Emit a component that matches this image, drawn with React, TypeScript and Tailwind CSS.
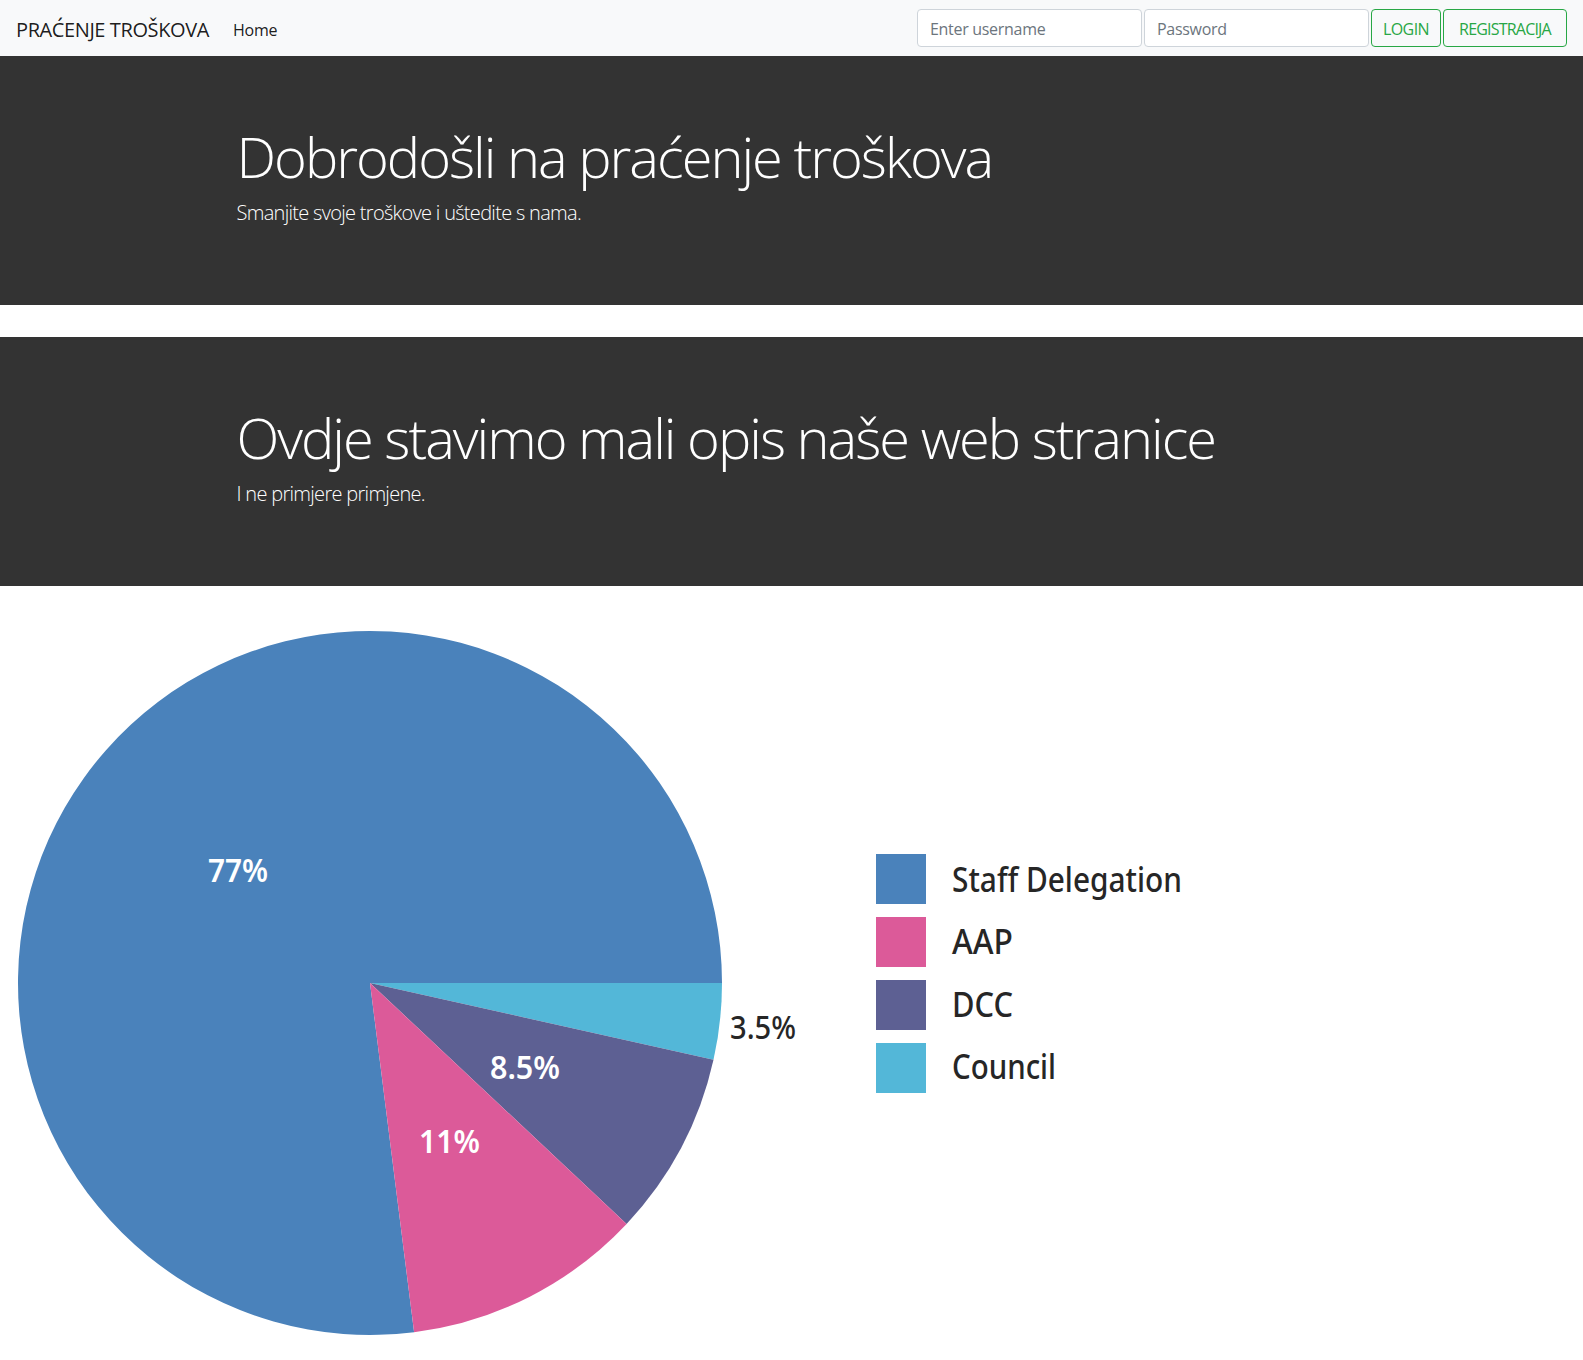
import React from "react";

const font = { fontFamily: '"Open Sans", "Noto Sans", sans-serif' };

function Chart() {
  const cx = 370;
  const cy = 397;
  const r = 352;
  const chartFont = '"Noto Sans", "Open Sans", sans-serif';
  const legend = [
    { label: "Staff Delegation", color: "#4a82bb", y: 268, base: 306, w: 230 },
    { label: "AAP", color: "#dc5a99", y: 331, base: 368, w: 61 },
    { label: "DCC", color: "#5d6093", y: 394, base: 431, w: 61 },
    { label: "Council", color: "#53b7d8", y: 457, base: 493, w: 104 },
  ];
  return (
    <svg width="1200" height="774" viewBox="0 0 1200 774" className="block">
      <path d={`M${cx} ${cy} L414.1 746.2 A${r} ${r} 0 1 1 722 397 Z`} fill="#4a82bb" />
      <path d={`M${cx} ${cy} L722 397 A${r} ${r} 0 0 1 713.5 473.8 Z`} fill="#53b7d8" />
      <path d={`M${cx} ${cy} L713.5 473.8 A${r} ${r} 0 0 1 626.6 638 Z`} fill="#5d6093" />
      <path d={`M${cx} ${cy} L626.6 638 A${r} ${r} 0 0 1 414.1 746.2 Z`} fill="#dc5a99" />
      <text x="208" y="296" fill="#fff" fontFamily={chartFont} fontWeight="600" fontSize="33" textLength="60" lengthAdjust="spacingAndGlyphs">77%</text>
      <text x="490" y="493" fill="#fff" fontFamily={chartFont} fontWeight="600" fontSize="33" textLength="70" lengthAdjust="spacingAndGlyphs">8.5%</text>
      <text x="419" y="567" fill="#fff" fontFamily={chartFont} fontWeight="600" fontSize="33" textLength="61" lengthAdjust="spacingAndGlyphs">11%</text>
      <text x="730" y="453" fill="#262626" fontFamily={chartFont} fontWeight="500" fontSize="33" textLength="66" lengthAdjust="spacingAndGlyphs">3.5%</text>
      {legend.map((l) => (
        <g key={l.label}>
          <rect x="876" y={l.y} width="50" height="50" fill={l.color} />
          <text x="952" y={l.base} fill="#262626" fontFamily={chartFont} fontWeight="500" fontSize="34" textLength={l.w} lengthAdjust="spacingAndGlyphs">
            {l.label}
          </text>
        </g>
      ))}
    </svg>
  );
}

function Jumbo({ title, lead }: { title: string; lead: string }) {
  return (
    <div className="bg-[#333] pt-[67px] pb-[61px] text-white">
      <div className="mx-auto w-[1140px] px-[15px]">
        <h1 className="mb-2 text-[56px] font-light leading-[1.2] tracking-[-2px]" style={font}>
          {title}
        </h1>
        <p className="mb-4 text-[20px] font-light leading-[1.5] tracking-[-0.7px]" style={font}>
          {lead}
        </p>
      </div>
    </div>
  );
}

export default function App() {
  return (
    <div className="min-h-[1360px] bg-white" style={font}>
      <nav className="flex h-14 items-center justify-between bg-[#f8f9fa] px-4">
        <div className="flex items-center pt-[3px]">
          <span className="mr-4 text-[20px] leading-[30px] tracking-[-0.4px] text-[#000000e6]">PRAĆENJE TROŠKOVA</span>
          <span className="px-2 text-[16px] leading-6 tracking-[-0.2px] text-[#000000e6]">Home</span>
        </div>
        <div className="flex items-center gap-[2px]">
          <div className="flex h-[38px] w-[225px] items-center rounded border border-[#ced4da] bg-white px-3 pt-[2px] text-[16px] tracking-[-0.3px] text-[#6c757d]">
            Enter username
          </div>
          <div className="flex h-[38px] w-[225px] items-center rounded border border-[#ced4da] bg-white px-3 pt-[2px] text-[16px] tracking-[-0.3px] text-[#6c757d]">
            Password
          </div>
          <div className="flex h-[38px] w-[70px] items-center justify-center rounded border border-[#28a745] pt-[2px] text-[16px] tracking-[-0.6px] text-[#28a745]">
            LOGIN
          </div>
          <div className="flex h-[38px] w-[124px] items-center justify-center rounded border border-[#28a745] pt-[2px] text-[16px] tracking-[-0.8px] text-[#28a745]">
            REGISTRACIJA
          </div>
        </div>
      </nav>
      <Jumbo title="Dobrodošli na praćenje troškova" lead="Smanjite svoje troškove i uštedite s nama." />
      <div className="h-8" />
      <Jumbo title="Ovdje stavimo mali opis naše web stranice" lead="I ne primjere primjene." />
      <Chart />
    </div>
  );
}
